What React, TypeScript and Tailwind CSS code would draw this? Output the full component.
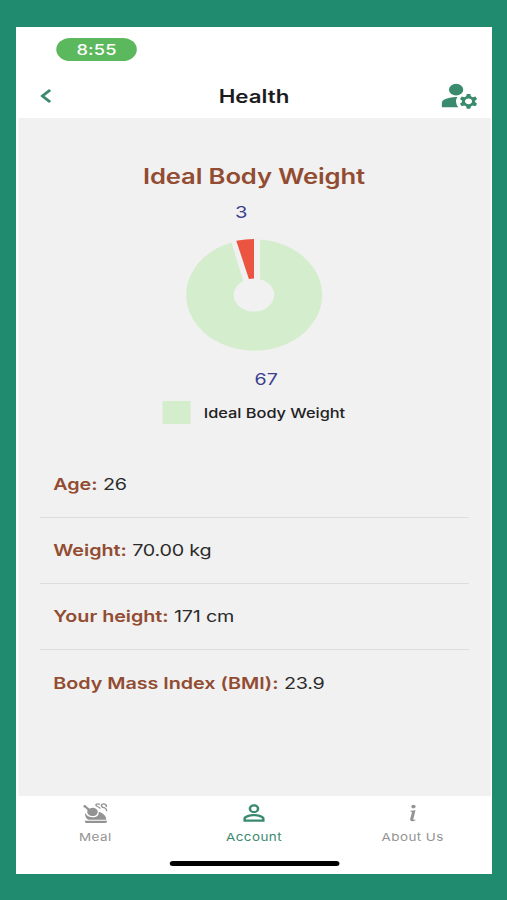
import { MdManageAccounts, MdPersonOutline } from "react-icons/md";
import { BsInfoLg } from "react-icons/bs";

const stats = [
  { label: "Age:", value: "26" },
  { label: "Weight:", value: "70.00 kg" },
  { label: "Your height:", value: "171 cm" },
  { label: "Body Mass Index (BMI):", value: "23.9" },
];

function TurkeyIcon() {
  return (
    <svg viewBox="0 0 60 60" className="my-0.5 size-5" fill="currentColor">
      {/* plate */}
      <path d="M4 53 H59 V55 C59 58 57 60 54 60 H9 C6 60 4 57 4 53 Z" />
      {/* body */}
      <path d="M5 30 C4 38 6 46 13 50 H57 C57 40 50 30 38 26 C40 36 33 44 22 43 C13 42 8 37 5 30 Z" />
      {/* leg */}
      <path d="M1 8 C3 5 7 6 8 10 L16 17 C23 12 32 15 35 22 C38 31 32 39 23 39 C13 39 8 31 11 22 L5 14 C1 14 -1 11 1 8 Z" />
      {/* steam */}
      <path
        d="M41 4 C34 1 29 5 33 9 C36 13 42 11 41 17 M47 3 C54 1 58 6 57 12 M46 13 C52 12 58 16 58 25 M47 3 C43 7 45 11 50 14"
        fill="none"
        stroke="currentColor"
        strokeWidth="3.6"
      />
    </svg>
  );
}

function WeightChart() {
  return (
    <div className="flex flex-col items-center">
      <span className="pr-[21px] text-[16.5px] leading-6 text-[#3a3f8f]">3</span>
      <svg viewBox="-56 -56 112 112" className="mt-[15px] h-28 w-28">
        <path
          d="M5 -55.5 A55.7 55.7 0 1 1 -18.5 -52.5 L-8.8 -14.1 A16.6 16.6 0 1 0 5 -15.8 Z"
          fill="#d4edcc"
        />
        <path d="M-14.5 -54.2 Q-7 -56 0 -56 L0 -16.6 L-4.2 -16.1 Z" fill="#ea5440" />
      </svg>
      <span className="mt-4 pl-5 text-[16px] leading-6 text-[#3a3f8f]">67</span>
    </div>
  );
}

export default function App() {
  return (
    <main className="h-[900px] w-full overflow-hidden bg-[#218b70] pt-[27px] pl-4 font-['Inter',sans-serif]">
      {/* 390pt wide screen, widened to fill the frame */}
      <div className="flex h-[847px] w-[390px] origin-left scale-x-[1.2205] flex-col bg-white">
        <div className="flex h-[46px] items-end pl-[33px]">
          <span className="mb-3 flex h-[23px] w-[66px] items-center justify-center rounded-full bg-[#5cb85c] pt-px text-[15px] font-medium tracking-[0.1px] text-white">
            8:55
          </span>
        </div>
        <header className="grid h-[45px] grid-cols-[1fr_auto_1fr] items-center pr-[9px] pl-5">
          <svg viewBox="0 0 9 14" className="mt-px h-[14px] w-[9px]" fill="none" stroke="#3a8a6e" strokeWidth="2.4">
            <path d="M8 1 L1.5 7 L8 13" />
          </svg>
          <h1 className="pt-[3px] pr-[11px] text-center text-[18.3px] font-semibold text-[#1c1c1e]">Health</h1>
          <MdManageAccounts className="size-[35px] justify-self-end text-[#3a8a6e]" />
        </header>

        <section className="mx-[1.5px] flex flex-1 flex-col bg-[#f1f1f1] pt-11">
          <h2 className="text-center text-[21px] leading-[30px] font-semibold tracking-[-0.1px] text-[#914c31]">
            Ideal Body Weight
          </h2>
          <div className="mt-2">
            <WeightChart />
          </div>
          <div className="mt-[10px] flex items-center justify-center gap-[11px]">
            <span className="h-[23px] w-[22.5px] bg-[#d4edcc]" />
            <span className="pt-px text-[13.4px] font-medium text-[#222]">Ideal Body Weight</span>
          </div>
          <ul className="mx-[18px] mt-7 divide-y divide-[#dcdcdc]">
            {stats.map((s) => (
              <li key={s.label} className="flex h-[66px] items-center gap-[4.5px] px-[11px] text-[16.2px]">
                <span className="font-semibold tracking-[-0.03px] text-[#914c31]">{s.label}</span>
                <span className="tracking-[-0.2px] text-[#2b2b2b]">{s.value}</span>
              </li>
            ))}
          </ul>
        </section>

        <nav className="flex h-[56px] text-[11px] tracking-[0.35px] text-[#939393]">
          <div className="flex flex-1 flex-col items-center gap-1 pt-[5px]">
            <TurkeyIcon />
            <span>Meal</span>
          </div>
          <div className="flex flex-1 flex-col items-center gap-1 pt-[5px] text-[#3a8a6e]">
            <MdPersonOutline className="-my-px size-[26px]" />
            <span>Account</span>
          </div>
          <div className="flex flex-1 flex-col items-center gap-1 pt-[5px]">
            <BsInfoLg className="size-6 py-px" />
            <span>About Us</span>
          </div>
        </nav>
        <div className="flex h-[22px] justify-center pt-[9px]">
          <span className="h-[5px] w-[139px] rounded-full bg-black" />
        </div>
      </div>
    </main>
  );
}
